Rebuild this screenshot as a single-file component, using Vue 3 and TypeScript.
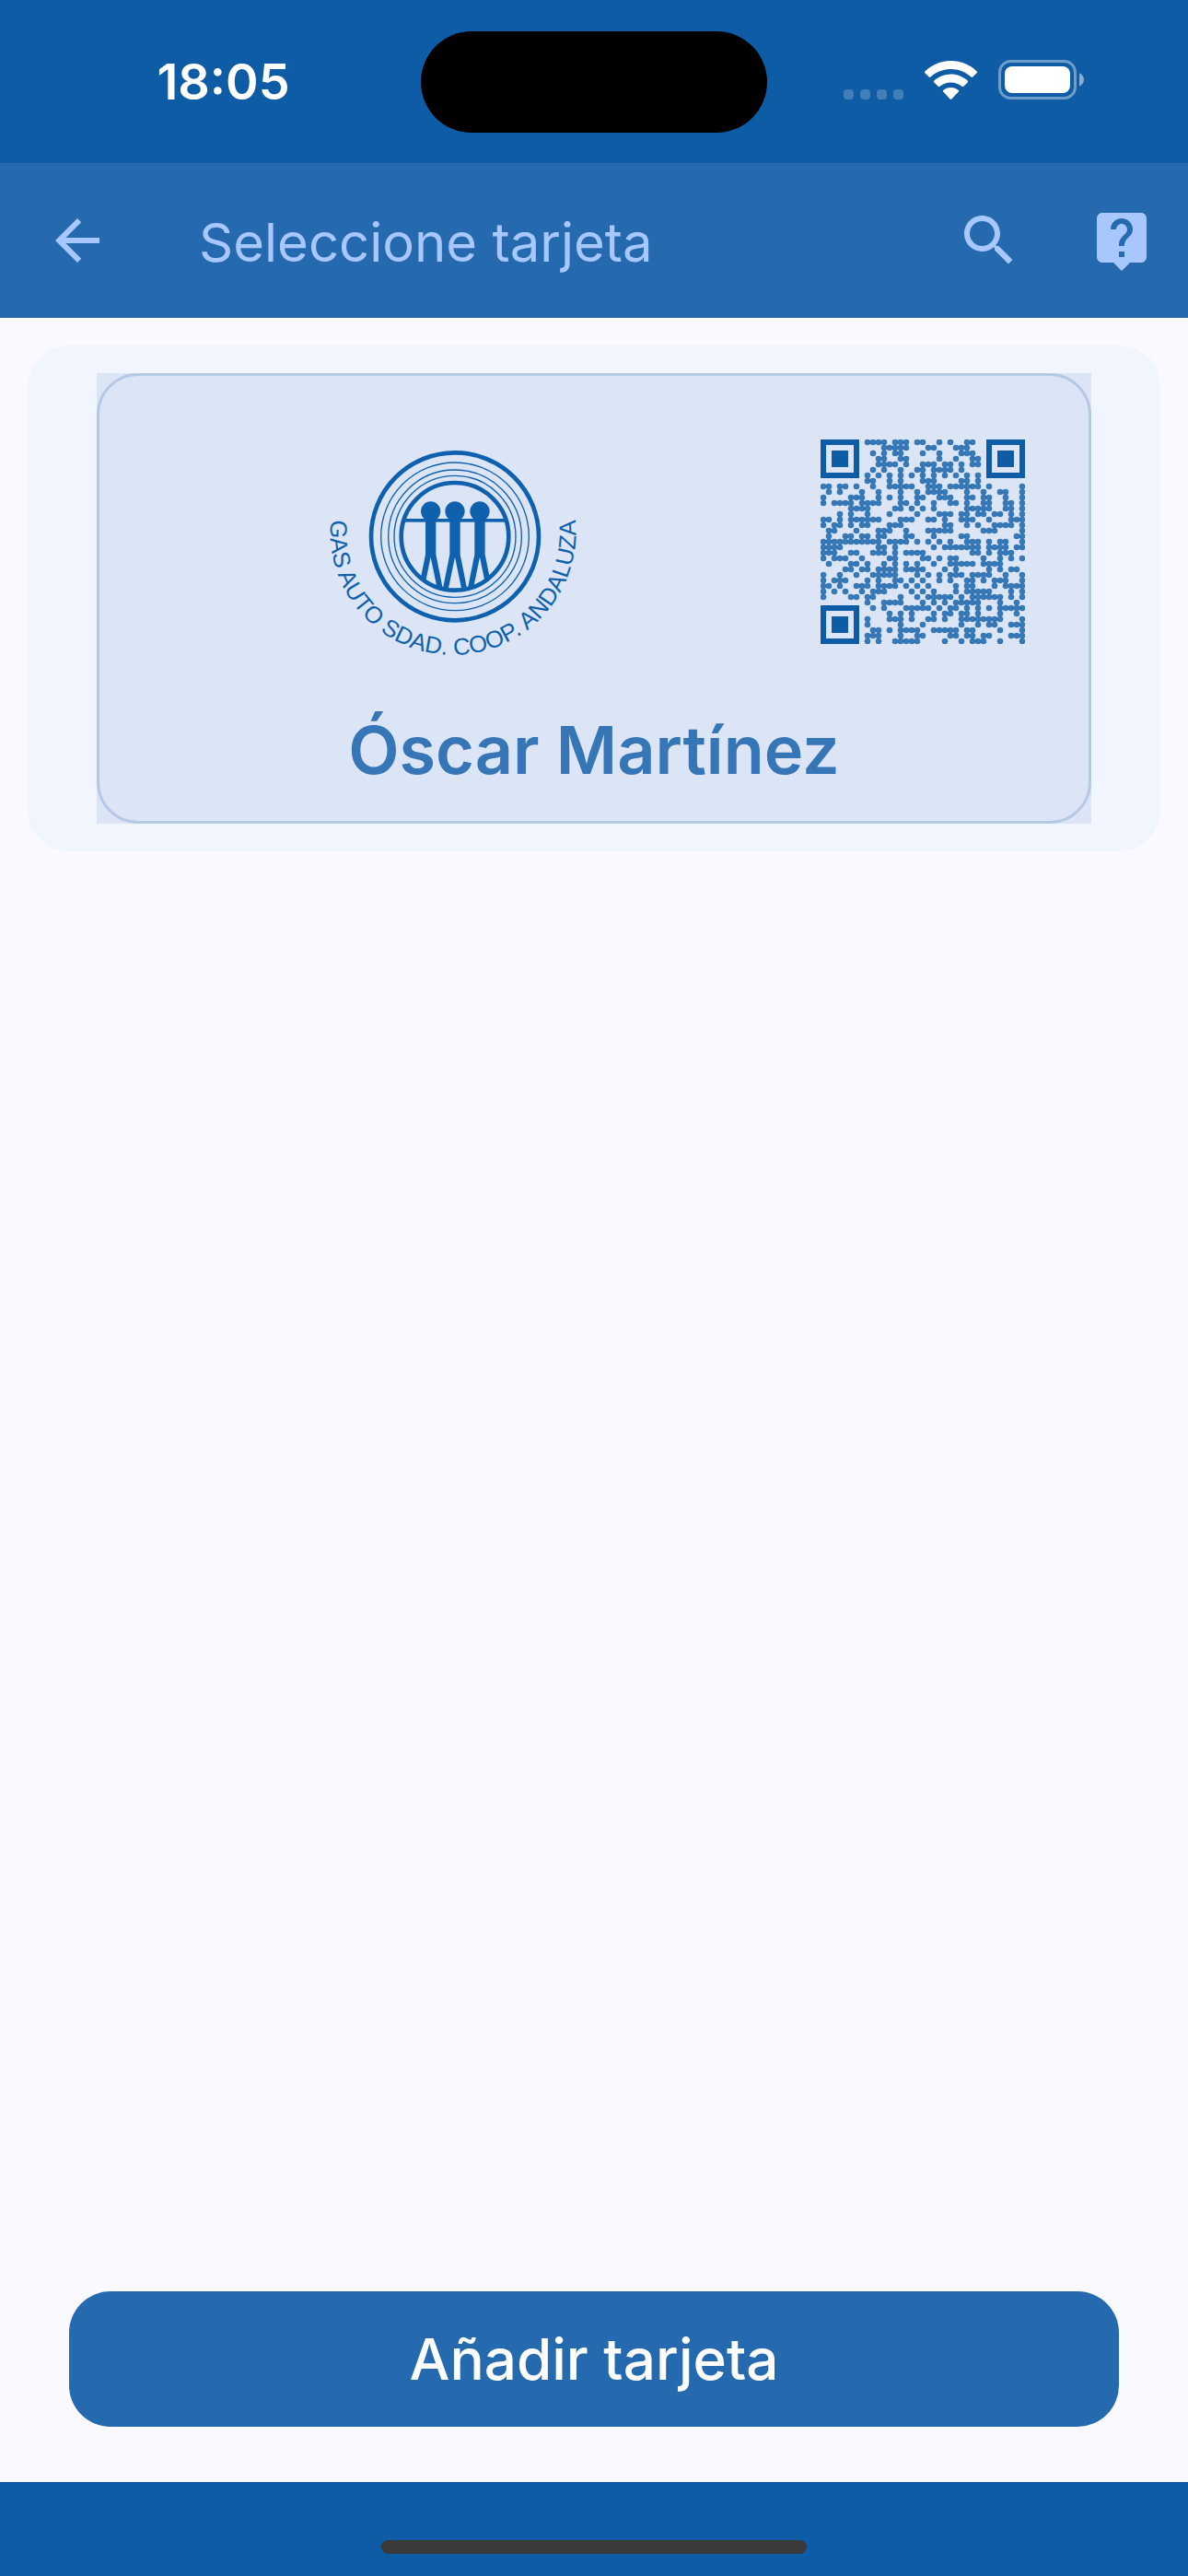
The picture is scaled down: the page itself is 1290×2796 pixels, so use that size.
<script setup lang="ts">
interface Dot {
  x: number
  y: number
}

// Dark modules of the code, one entry per row, as column ranges.
// The three finder squares are drawn apart.
const rows: string[] = [
  '8-11 13-15 17-18 21 23 26-27',
  '11-15 19-20 24-26',
  '9 11 13-14 18 21 25-27',
  '10-11 14-15 21 24 27-28',
  '10-13 15 18-20 22-23 25 27-28',
  '9 11 14 17-18 20-23 25',
  '8 10 12 14 16 18 20 22 24 26 28',
  '8-9 12 14 18-20 25-26 28',
  '0-1 3-4 6 9 12-16 19-21 23-28 30 36',
  '1 3 7 10 14 17 19-22 26 29 32-33 36',
  '0 5-7 10 12 14 17-18 21-23 26-27 29-30 33 36',
  '0 2-5 7-10 14-15 17 20 23-24 26 29-30 33-34 36',
  '5-8 13-14 16 18 20 26-30 33-34 36',
  '3 5 8 12 17 21-23 25-26 28-29 31-32 34 36',
  '0-1 3 5-10 14-16 19-20 22 25-27 30 34-36',
  '0 2-3 5 7-8 12-14 22-23 26 28 31-34 36',
  '1-2 6 10-12 15 19-23 29-31 36',
  '1 4-5 7-8 10-11 15-16 20 25-26 35-36',
  '0-10 12-15 17 19 21 23 26-28 30 32-33 36',
  '0-3 10-11 13 20 22-28 30-33 35-36',
  '0-2 5-6 9-11 13 15-18 27-28 30 32-34',
  '0 2-4 7 12-13 18-19 21 23-24 29 32 34 36',
  '1 5-6 8 11 13 15 17 20 23-27 29-32',
  '4-5 7-8 10-13 15-18 22 24 30 32 34-35',
  '0 3 6 9-13 17 19 21 23-25 27-30 33 36',
  '0 2-4 8 10 13-14 16 18 21 23 26-27 29 31-33 36',
  '0-1 3 6-8 10-13 15 17 19 24 26-27 31 33-36',
  '0 2 4 7 9-11 16 18 20 24 26-30 34 36',
  '0 5-6 8-9 14 17 19-23 25 27-32 34 36',
  '8 11-14 18 20 22 24-28 32 35',
  '9 11 15-19 21 23-24 26 28 30 32-36',
  '12 14 16 20 22-23 25-26 28 32 35',
  '8 12-14 16 19-20 22 25-32 36',
  '8 14 18 25 28 30-31 34-36',
  '9-10 12 14-17 20-24 26-27 32 36',
  '8-10 14 17-18 23-24 26-27 29-30 34-36',
  '8 10 13-17 22 25 27-29 32 36',
]

const dots: Dot[] = rows.flatMap((row, y) =>
  row.split(' ').flatMap((range) => {
    const [from, to = from] = range.split('-').map(Number)
    return Array.from({ length: to - from + 1 }, (_, i) => ({ x: from + i, y }))
  }),
)

const finders: Dot[] = [
  { x: 0, y: 0 },
  { x: 30, y: 0 },
  { x: 0, y: 30 },
]
</script>

<template>
  <div class="screen">
    <div class="status">
      <div class="status-side">
        <span class="time">18:05</span>
      </div>
      <div class="island"></div>
      <div class="status-side status-icons">
        <span class="signal"><i></i><i></i><i></i><i></i></span>
        <svg class="wifi" viewBox="0 0 57 42" aria-hidden="true">
          <path d="M28.500 0C39.500 0 49.500 4.300 56.600 11.400Q57.400 12.300 56.600 13.200L52.300 17.600Q51.400 18.400 50.500 17.600C44.600 12.100 36.900 8.900 28.500 8.900S12.400 12.100 6.500 17.600Q5.600 18.400 4.700 17.600L.4 13.200Q-.4 12.300 .4 11.400C7.500 4.300 17.500 0 28.500 0Z" />
          <path d="M28.500 14.500C35.500 14.500 41.900 17.200 46.700 21.600Q47.500 22.500 46.700 23.400L42.300 27.800Q41.400 28.600 40.500 27.800C37.300 25 33.100 23.400 28.500 23.400S19.700 25 16.500 27.800Q15.600 28.600 14.700 27.800L10.300 23.400Q9.500 22.500 10.300 21.600C15.100 17.200 21.500 14.500 28.500 14.500Z" />
          <path d="M28.500 29C31.600 29 34.500 30.100 36.800 31.900Q37.600 32.700 36.800 33.600L29.400 41.400Q28.500 42.200 27.600 41.400L20.200 33.600Q19.400 32.700 20.200 31.900C22.500 30.100 25.400 29 28.500 29Z" />
        </svg>
        <svg class="battery" viewBox="0 0 94 43" aria-hidden="true">
          <rect x="1.500" y="1.500" width="82" height="40" rx="12" fill="none" stroke="#fff" stroke-opacity=".4" stroke-width="3" />
          <rect x="7" y="7" width="71" height="29" rx="8" fill="#fff" />
          <path d="M88 14.500c3 1 5 3.800 5 7s-2 6-5 7z" fill="#fff" fill-opacity=".5" />
        </svg>
      </div>
    </div>

    <header class="appbar">
      <button class="icon-btn back" type="button" aria-label="Atrás">
        <svg viewBox="0 0 24 24"><path d="M20 11H7.830l5.590-5.590L12 4l-8 8 8 8 1.410-1.410L7.830 13H20z" /></svg>
      </button>
      <h1 class="title">Seleccione tarjeta</h1>
      <button class="icon-btn" type="button" aria-label="Buscar">
        <svg viewBox="0 0 24 24"><path d="M15.500 14h-.79l-.28-.27C15.410 12.590 16 11.110 16 9.500 16 5.910 13.090 3 9.500 3S3 5.910 3 9.500 5.910 16 9.500 16c1.610 0 3.090-.59 4.230-1.570l.27.28v.79l5 4.990L20.490 19l-4.990-5zm-6 0C7.010 14 5 11.990 5 9.500S7.010 5 9.500 5 14 7.010 14 9.500 11.990 14 9.500 14z" /></svg>
      </button>
      <button class="icon-btn" type="button" aria-label="Ayuda">
        <svg viewBox="0 0 24 24"><path d="M19 2H5c-1.110 0-2 .9-2 2v14c0 1.100.89 2 2 2h4l3 3 3-3h4c1.100 0 2-.9 2-2V4c0-1.100-.9-2-2-2zm-6 16h-2v-2h2v2zm2.070-7.750l-.9.92C13.450 11.900 13 12.500 13 14h-2v-.5c0-1.100.45-2.100 1.170-2.830l1.240-1.260c.37-.36.59-.86.59-1.410 0-1.100-.9-2-2-2s-2 .9-2 2H8c0-2.210 1.790-4 4-4s4 1.790 4 4c0 .88-.36 1.680-.93 2.250z" /></svg>
      </button>
    </header>

    <main class="content">
      <article class="card">
        <div class="pass-back">
          <div class="pass">
            <div class="pass-top">
              <div class="logo-area">
                <svg class="logo" viewBox="0 0 912 744">
                  <defs>
                    <clipPath id="seal"><circle cx="462" cy="337" r="178" /></clipPath>
                    <path id="rim" d="M74 204A400 400 0 1 0 838 204" />
                  </defs>
                  <g fill="none" stroke="#0f61ae">
                    <circle cx="462" cy="337" r="273" stroke-width="14" />
                    <circle cx="462" cy="337" r="241" stroke-width="4" />
                    <circle cx="462" cy="337" r="217" stroke-width="4" />
                    <circle cx="462" cy="337" r="198" stroke-width="4" />
                    <circle cx="462" cy="337" r="175" stroke-width="14" />
                  </g>
                  <g fill="#0f61ae" clip-path="url(#seal)">
                    <rect x="290" y="279" width="344" height="11" />
                    <g v-for="x in [383, 462, 543]" :key="x" :transform="`translate(${x} 0)`">
                      <circle cx="0" cy="255" r="32" />
                      <path d="M-17 270H17V395L42 520H24L0 404L-24 520H-42L-17 395Z" />
                    </g>
                  </g>
                  <text class="logo-text" text-anchor="middle">
                    <textPath href="#rim" startOffset="50%">GAS AUTO SDAD. COOP. ANDALUZA</textPath>
                  </text>
                </svg>
              </div>
              <svg class="qr" viewBox="0 0 222 222" role="img" aria-label="Código QR">
                <g fill="#0e5ca6" fill-opacity=".8">
                  <circle v-for="d in dots" :key="`${d.x}-${d.y}`" :cx="d.x * 6 + 3" :cy="d.y * 6 + 3" r="3.300" />
                </g>
                <g v-for="f in finders" :key="`${f.x}-${f.y}`" :transform="`translate(${f.x * 6} ${f.y * 6})`">
                  <rect x="3" y="3" width="36" height="36" fill="none" stroke="#0e5ca6" stroke-width="6" />
                  <rect x="12" y="12" width="18" height="18" fill="#0e5ca6" />
                </g>
              </svg>
            </div>
            <h2 class="name">Óscar Martínez</h2>
          </div>
        </div>
      </article>
    </main>

    <div class="actions">
      <button class="add" type="button">Añadir tarjeta</button>
    </div>
    <footer class="home"><span class="home-bar"></span></footer>
  </div>
</template>

<style>
body {
  margin: 0;
}
</style>

<style scoped>
.screen {
  display: flex;
  flex-direction: column;
  min-height: 100vh;
  background: #faf9ff;
  font-family: Inter, "Liberation Sans", sans-serif;
}

.status {
  display: grid;
  grid-template-columns: 1fr 376px 1fr;
  align-items: center;
  height: 177px;
  background: #0e5ca6;
  color: #fff;
}

.status-side {
  display: flex;
  justify-content: center;
  padding-left: 28px;
}

.time {
  font-size: 54px;
  line-height: 60px;
  font-weight: 600;
}

.island {
  height: 110px;
  border-radius: 55px;
  background: #000;
}

.status-side.status-icons {
  align-items: flex-end;
  justify-content: flex-end;
  gap: 23px;
  padding: 0 112px 4px 0;
}

.signal {
  display: flex;
  gap: 7px;
}

.signal i {
  width: 11px;
  height: 11px;
  border-radius: 4px;
  background: rgba(255, 255, 255, 0.22);
}

.wifi {
  width: 57px;
  height: 42px;
  fill: #fff;
}

.battery {
  width: 94px;
  height: 43px;
}

.appbar {
  display: flex;
  align-items: center;
  gap: 72px;
  height: 168px;
  padding: 0 36px 0 48px;
  background: #256aaf;
  color: #a8c7ff;
}

.icon-btn {
  flex: none;
  width: 72px;
  height: 72px;
  padding: 0;
  border: 0;
  background: none;
  color: inherit;
}

.icon-btn svg {
  display: block;
  width: 72px;
  height: 72px;
  fill: currentColor;
}

.back {
  margin-right: 24px;
}

.title {
  flex: 1;
  margin: 0;
  padding-top: 4px;
  font-size: 58px;
  line-height: 84px;
  font-weight: 400;
}

.content {
  flex: 1;
  padding: 30px;
}

.card {
  padding: 30px 75px;
  border-radius: 45px;
  background: #f1f5fe;
}

.pass-back {
  background: #dce5f5;
}

.pass {
  padding-bottom: 35px;
  border: 3px solid #b4c9e6;
  border-radius: 45px;
}

.pass-top {
  display: flex;
  gap: 16px;
  padding: 62px 69px 0 0;
}

.logo-area {
  flex: 1;
  display: flex;
  justify-content: center;
}

.logo {
  width: 304px;
  height: 248px;
}

.logo-text {
  fill: #0f61ae;
  font-family: "Liberation Sans", Arial, sans-serif;
  font-size: 77px;
}

.qr {
  width: 222px;
  height: 222px;
  margin-top: 7px;
}

.name {
  margin: 54px 0 0;
  color: #3776b6;
  font-size: 72px;
  line-height: 84px;
  font-weight: 600;
  text-align: center;
}

.actions {
  display: flex;
  padding: 0 75px 60px;
}

.add {
  flex: 1;
  height: 147px;
  padding: 0;
  border: 0;
  border-radius: 45px;
  background: #256aaf;
  color: #fff;
  font-family: inherit;
  font-size: 62px;
  font-weight: 500;
}

.home {
  display: flex;
  justify-content: center;
  align-items: flex-end;
  height: 102px;
  background: #0e5ca6;
}

.home-bar {
  width: 462px;
  height: 15px;
  margin-bottom: 24px;
  border-radius: 8px;
  background: #3a3a3a;
}
</style>
